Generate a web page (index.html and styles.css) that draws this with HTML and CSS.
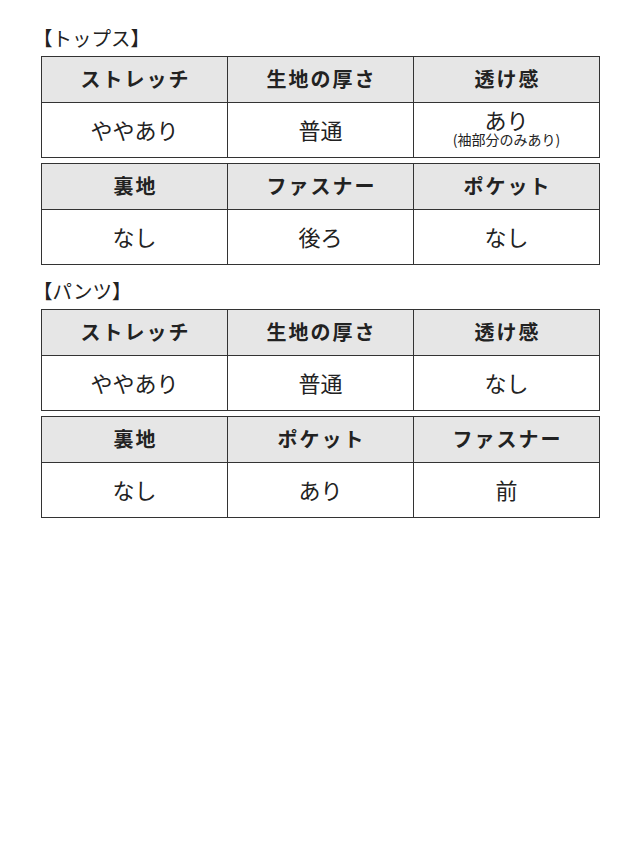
FILE: index.html
```html
<!DOCTYPE html>
<html lang="ja">
<head>
<meta charset="utf-8">
<link rel="stylesheet" href="styles.css">
</head>
<body>
<div class="page">
  <section class="sec sec-first">
    <h2 class="title">【トップス】</h2>
    <div class="tbl">
      <div class="th">ストレッチ</div>
      <div class="th">生地の厚さ</div>
      <div class="th">透け感</div>
      <div class="td">ややあり</div>
      <div class="td">普通</div>
      <div class="td td-stack"><span class="main">あり</span><span class="note">(袖部分のみあり)</span></div>
    </div>
    <div class="tbl">
      <div class="th">裏地</div>
      <div class="th">ファスナー</div>
      <div class="th">ポケット</div>
      <div class="td">なし</div>
      <div class="td">後ろ</div>
      <div class="td">なし</div>
    </div>
  </section>
  <section class="sec">
    <h2 class="title">【パンツ】</h2>
    <div class="tbl">
      <div class="th">ストレッチ</div>
      <div class="th">生地の厚さ</div>
      <div class="th">透け感</div>
      <div class="td">ややあり</div>
      <div class="td">普通</div>
      <div class="td">なし</div>
    </div>
    <div class="tbl">
      <div class="th">裏地</div>
      <div class="th">ポケット</div>
      <div class="th">ファスナー</div>
      <div class="td">なし</div>
      <div class="td">あり</div>
      <div class="td">前</div>
    </div>
  </section>
</div>
</body>
</html>
```
FILE: styles.css
```css
html, body {
  margin: 0;
  padding: 0;
  background: #ffffff;
}
body {
  font-family: "Noto Sans CJK JP", "Noto Sans", sans-serif;
  color: #222222;
}
.page {
  padding: 26px 0 0 41px;
}
.sec {
  margin-top: 14px;
}
.sec-first {
  margin-top: 0;
}
.title {
  margin: 0 0 6px -8px;
  font-size: 19.5px;
  line-height: 24px;
  font-weight: normal;
  color: #222222;
}
.tbl {
  display: grid;
  grid-template-columns: repeat(3, 186px);
  grid-template-rows: 46px 55px;
  width: max-content;
  border-left: 1px solid #333333;
  border-top: 1px solid #333333;
  margin-bottom: 5px;
}
.tbl:last-child {
  margin-bottom: 0;
}
.th, .td {
  border-right: 1px solid #333333;
  border-bottom: 1px solid #333333;
  display: flex;
  align-items: center;
  justify-content: center;
  text-align: center;
  padding-bottom: 2px;
}
.th {
  background: #e6e6e6;
  font-size: 20px;
  font-weight: bold;
  letter-spacing: 2px;
  padding-left: 2px;
}
.td {
  font-size: 22px;
}
.td-stack {
  flex-direction: column;
  padding-bottom: 5px;
}
.main {
  line-height: 22px;
}
.note {
  font-size: 14px;
  line-height: 16px;
  margin-top: 1px;
}
```
